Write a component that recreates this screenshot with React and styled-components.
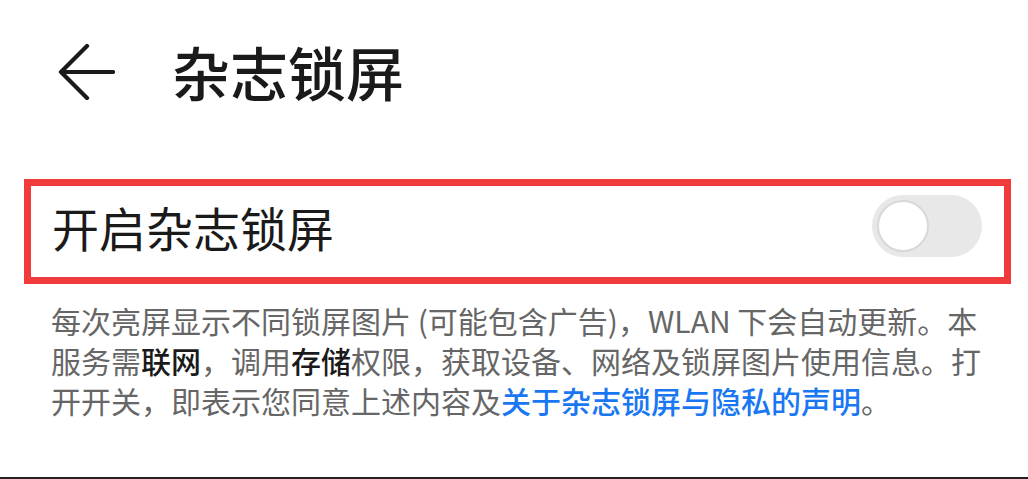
import React from 'react';
import styled, { createGlobalStyle } from 'styled-components';

const GlobalStyle = createGlobalStyle`
    html, body {
        margin: 0;
        padding: 0;
        background: #ffffff;
    }
    body {
        font-family: "Noto Sans CJK SC", "Noto Sans", sans-serif;
        color: #1a1a1a;
    }
`;

const Page = styled.div`
    display: flex;
    flex-direction: column;
    height: 479px;
    overflow: hidden;
`;

const Header = styled.header`
    align-items: center;
    display: flex;
    gap: 57px;
    height: 142px;
    padding-left: 57px;
`;

const BackButton = styled.button`
    background: none;
    border: none;
    display: flex;
    padding: 0;
    cursor: pointer;
`;

const Title = styled.h1`
    font-size: 58px;
    font-weight: 500;
    line-height: 1;
    margin: 0;
    color: #1a1a1a;
`;

const SwitchRow = styled.div`
    align-items: center;
    border: 7px solid #f03a3c;
    box-sizing: border-box;
    display: flex;
    height: 105px;
    justify-content: space-between;
    margin: 37px 17px 0 24px;
    padding: 0 22px 11px 21px;
`;

const Label = styled.span`
    font-size: 47px;
    line-height: 1;
    color: #1a1a1a;
`;

const Track = styled.div`
    background: #e8e8e8;
    border-radius: 31px;
    box-sizing: border-box;
    display: flex;
    align-items: center;
    height: 62px;
    padding: 0 5px;
    width: 110px;
    justify-content: ${props => props.on ? 'flex-end' : 'flex-start'};
`;

const Knob = styled.div`
    background: #ffffff;
    border: 2px solid #d8d8d8;
    border-radius: 50%;
    box-sizing: border-box;
    height: 52px;
    width: 52px;
`;

const Note = styled.p`
    color: #666666;
    font-size: 30px;
    line-height: 40px;
    margin: 16px 0 0;
    padding: 0 40px 0 51px;
`;

const Strong = styled.span`
    color: #1a1a1a;
    font-weight: 500;
`;

const Link = styled.a`
    color: #1a77f2;
    font-weight: 500;
    text-decoration: none;
`;

const BottomEdge = styled.div`
    background: #222222;
    height: 2px;
    margin-top: auto;
`;

const BackIcon = () => (
    <svg width="58" height="58" viewBox="0 0 58 58" fill="none">
        <path d="M30 4 L4 30 L30 56 M4 30 L56 30" stroke="#1a1a1a" strokeWidth="4.2"
            strokeLinecap="round" strokeLinejoin="round" />
    </svg>
);

const App = () => {
    return (
        <Page>
            <GlobalStyle />
            <Header>
                <BackButton aria-label="返回">
                    <BackIcon />
                </BackButton>
                <Title>杂志锁屏</Title>
            </Header>
            <SwitchRow>
                <Label>开启杂志锁屏</Label>
                <Track on={false}>
                    <Knob />
                </Track>
            </SwitchRow>
            <Note>
                每次亮屏显示不同锁屏图片 (可能包含广告)，WLAN 下会自动更新。本服务需<Strong>联网</Strong>，调用<Strong>存储</Strong>权限，获取设备、网络及锁屏图片使用信息。打开开关，即表示您同意上述内容及<Link href="#">关于杂志锁屏与隐私的声明</Link>。
            </Note>
            <BottomEdge />
        </Page>
    );
};

export default App;
